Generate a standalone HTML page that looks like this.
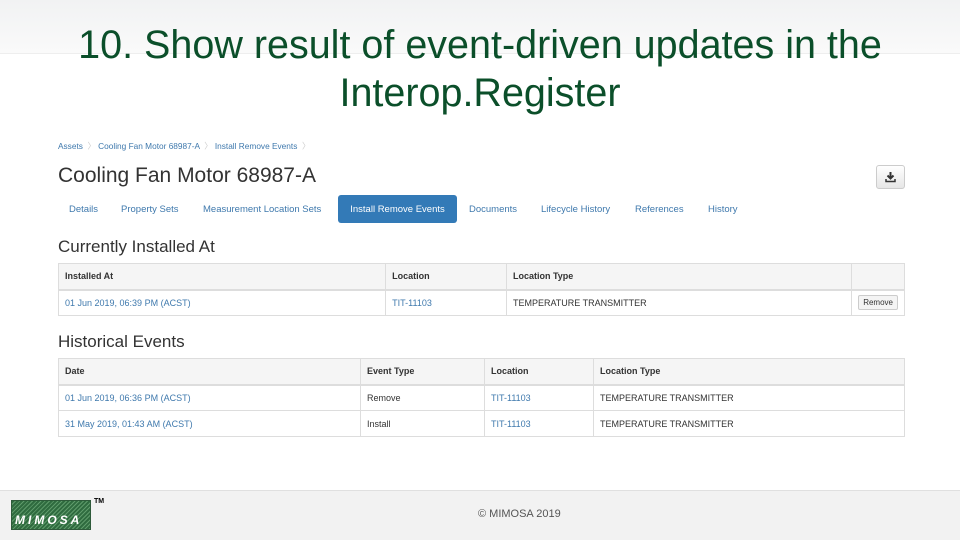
<!DOCTYPE html>
<html><head><meta charset="utf-8"><style>
*{margin:0;padding:0;box-sizing:border-box}
body{width:960px;height:540px;position:relative;background:#fff;font-family:"Liberation Sans",sans-serif;overflow:hidden}
.hdr{position:absolute;left:0;top:0;width:960px;height:54px;background:linear-gradient(#f1f2f3,#fafafa);border-bottom:1px solid #eee}
.title{position:absolute;left:0;width:960px;text-align:center;color:#0b4f2a;font-size:39.5px;line-height:48px}
.a{position:absolute;white-space:nowrap}
.bc{font-size:8.3px;color:#3f79ad;top:140px}
.sep{color:#ccc}
.h1{left:58px;top:164px;font-size:21px;color:#333}
.tab{top:204px;font-size:9.5px;color:#3f79ad;line-height:12px}
.act{position:absolute;left:338px;top:195px;width:119px;height:28px;background:#337ab7;border-radius:3px;color:#fff;font-size:9.5px;text-align:center;line-height:29px}
.h2{left:58px;font-size:17px;color:#333}
table{position:absolute;left:58px;width:847px;border-collapse:collapse;font-size:9px}
td,th{border:1px solid #ddd;padding:0 6px;text-align:left;vertical-align:middle}
th{background:#f5f5f5;font-weight:bold;color:#333;height:26px;border-bottom:2px solid #ddd}
td{height:26px;color:#333}
.l{color:#3f79ad}
.foot{position:absolute;left:0;top:490px;width:960px;height:50px;background:#f2f2f2;border-top:1px solid #e0e0e0}
</style></head><body>
<div class="hdr"></div>
<div class="title" style="top:21px">10. Show result of event-driven updates in the</div>
<div class="title" style="top:69px">Interop.Register</div>

<div class="a bc" style="left:58px">Assets <span class="sep">&nbsp;〉</span>&nbsp;Cooling Fan Motor 68987-A <span class="sep">&nbsp;〉</span>&nbsp;Install Remove Events <span class="sep">&nbsp;〉</span></div>
<div class="a h1">Cooling Fan Motor 68987-A</div>
<div class="a" style="left:876px;top:165px;width:29px;height:24px;border:1px solid #ccc;border-radius:3px;background:linear-gradient(#fff,#e6e6e6)">
<svg width="27" height="22" viewBox="0 0 27 22"><path d="M13.5 6v6M10.5 9.5l3 3 3-3" stroke="#333" stroke-width="2" fill="none"/><path d="M9 13v2.5h9V13" stroke="#333" stroke-width="1.5" fill="none"/></svg></div>
<div class="a tab" style="left:69px">Details</div>
<div class="a tab" style="left:121px">Property Sets</div>
<div class="a tab" style="left:203px">Measurement Location Sets</div>
<div class="act">Install Remove Events</div>
<div class="a tab" style="left:469px">Documents</div>
<div class="a tab" style="left:541px">Lifecycle History</div>
<div class="a tab" style="left:635px">References</div>
<div class="a tab" style="left:708px">History</div>

<div class="a h2" style="top:237px">Currently Installed At</div>
<table style="top:263px">
<tr><th style="width:328px">Installed At</th><th style="width:121px">Location</th><th style="width:346px">Location Type</th><th></th></tr>
<tr><td class="l">01 Jun 2019, 06:39 PM (ACST)</td><td class="l">TIT-11103</td><td>TEMPERATURE TRANSMITTER</td><td><span style="display:inline-block;border:1px solid #ccc;border-radius:2px;background:#f4f4f4;font-size:8px;padding:2px 4px">Remove</span></td></tr>
</table>

<div class="a h2" style="top:332px">Historical Events</div>
<table style="top:358px">
<tr><th style="width:302px">Date</th><th style="width:124px">Event Type</th><th style="width:109px">Location</th><th>Location Type</th></tr>
<tr><td class="l">01 Jun 2019, 06:36 PM (ACST)</td><td>Remove</td><td class="l">TIT-11103</td><td>TEMPERATURE TRANSMITTER</td></tr>
<tr><td class="l">31 May 2019, 01:43 AM (ACST)</td><td>Install</td><td class="l">TIT-11103</td><td>TEMPERATURE TRANSMITTER</td></tr>
</table>

<div class="foot"></div>
<div class="a" style="left:11px;top:500px;width:80px;height:30px;border:1px solid #2e5a3a;background:repeating-linear-gradient(135deg,#2f6b3f 0 2px,#5e9a6a 2px 3px);color:#fff;font-weight:bold;font-style:italic;font-size:12px;letter-spacing:3px;padding:12px 0 0 3px;line-height:14px">MIMOSA</div>
<div class="a" style="left:94px;top:498px;font-size:7px;font-weight:bold">TM</div>
<div class="a" style="left:478px;top:508px;font-size:11px;color:#555">© MIMOSA 2019</div>
</body></html>
